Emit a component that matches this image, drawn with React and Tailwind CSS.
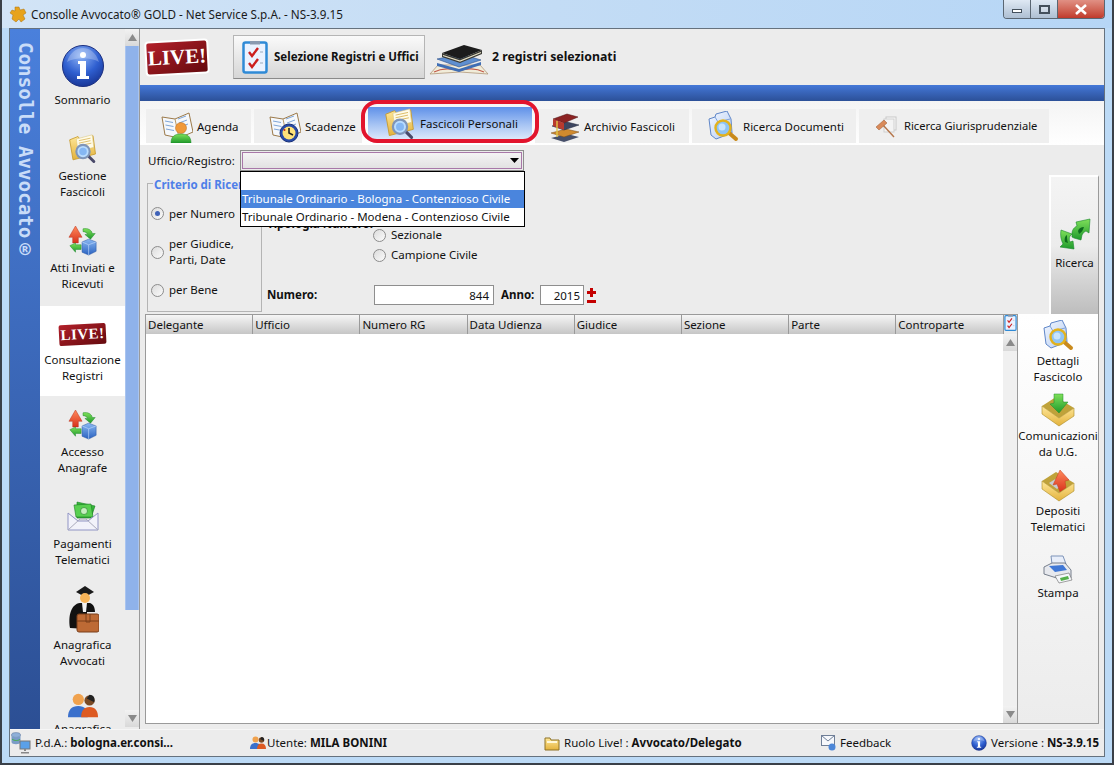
import React from 'react';

// shared gradients, referenced from all the icons below
const IconDefs = () => (
  <svg width="0" height="0" className="absolute">
    <defs>
      <radialGradient id="gBlueBall" cx="45%" cy="25%" r="80%">
        <stop offset="0" stopColor="#8fb4f5" />
        <stop offset="0.55" stopColor="#2f5fd0" />
        <stop offset="1" stopColor="#16318f" />
      </radialGradient>
      <linearGradient id="gFolder" x1="0" y1="0" x2="0" y2="1">
        <stop offset="0" stopColor="#ffe89a" />
        <stop offset="1" stopColor="#e3b23c" />
      </linearGradient>
      <linearGradient id="gGreen" x1="0" y1="0" x2="0" y2="1">
        <stop offset="0" stopColor="#7fe05a" />
        <stop offset="1" stopColor="#1f9a2c" />
      </linearGradient>
      <linearGradient id="gRed" x1="0" y1="0" x2="0" y2="1">
        <stop offset="0" stopColor="#ff8a5c" />
        <stop offset="1" stopColor="#d8321c" />
      </linearGradient>
      <linearGradient id="gBox" x1="0" y1="0" x2="0" y2="1">
        <stop offset="0" stopColor="#8ab8f2" />
        <stop offset="1" stopColor="#2a62c0" />
      </linearGradient>
      <linearGradient id="gPaper" x1="0" y1="0" x2="1" y2="1">
        <stop offset="0" stopColor="#f4f8ff" />
        <stop offset="1" stopColor="#b6cdf2" />
      </linearGradient>
    </defs>
  </svg>
);

const InfoIcon = ({ size = 44 }) => (
  <svg width={size} height={size} viewBox="0 0 44 44">
    <circle cx="22" cy="22" r="20.5" fill="url(#gBlueBall)" stroke="#1b2f80" />
    <path d="M6 18C9 8 16 4 22 4s13 4 16 14c-8-5-24-5-32 0z" fill="#fff" opacity="0.25" />
    <circle cx="22" cy="11" r="3" fill="#fff" />
    <path d="M17 17h8v15h3v3H16v-3h3V20h-2z" fill="#fff" />
  </svg>
);

const Magnifier = ({ x = 14, y = 22 }) => (
  <g transform={`translate(${x} ${y})`}>
    <path d="M15 14l7 7" stroke="#4a4a6a" strokeWidth="3.5" strokeLinecap="round" />
    <circle cx="9" cy="9" r="8" fill="#b8dcff" stroke="#7f95b8" strokeWidth="2.5" />
    <circle cx="9" cy="9" r="4.5" fill="#6fa6ee" opacity="0.7" />
  </g>
);

const FolderSearchIcon = ({ size = 32 }) => (
  <svg width={size} height={size} viewBox="0 0 36 36">
    <path d="M2 7l10-4 2 3 16-4 3 22-27 7z" fill="url(#gFolder)" stroke="#c79a2c" />
    <path d="M10 6l19-5 2 15-19 5z" fill="#fffbe8" stroke="#d7c27a" strokeWidth="0.6" />
    <path d="M13 8l14-3M13 11l14-3M14 14l14-3" stroke="#d8b45a" strokeWidth="1" />
    <Magnifier x={9} y={12} />
  </svg>
);

const ArrowsBoxIcon = ({ size = 30 }) => (
  <svg width={size} height={size} viewBox="0 0 32 32">
    <path d="M8 0l7 12h-4v6H5v-6H1z" fill="url(#gRed)" stroke="#b92b18" strokeWidth="0.5" />
    <path d="M16 3c5-1 9 1 10 5h3l-5 6-6-5h3c-1-2-3-3-5-3z" fill="url(#gGreen)" stroke="#1d8a2a" strokeWidth="0.5" />
    <path d="M2 21l6-3v2h6v5H8v3z" fill="url(#gGreen)" stroke="#1d8a2a" strokeWidth="0.5" />
    <path d="M15 17l7-3 8 3v10l-8 4-7-3z" fill="url(#gBox)" stroke="#1f4d9e" strokeWidth="0.5" />
    <path d="M22 20l8-3M22 20l-7-3M22 20v11" stroke="#bcd6fa" strokeWidth="0.7" fill="none" />
  </svg>
);

const LiveBadge = ({ small = false }) => (
  <div
    className={`flex items-center justify-center rounded-[2px] font-['Liberation_Serif',serif] font-bold text-white bg-gradient-to-br from-[#b3202a] to-[#650a0e] -rotate-3 ${
      small
        ? 'w-[47px] h-[21px] text-[15px] leading-none tracking-[0.5px]'
        : 'w-[60px] h-[31px] text-[21px] leading-none shadow-[0_0_0_2px_#fff]'
    }`}
  >
    LIVE!
  </div>
);

const ChecklistIcon = ({ w = 26, h = 33 }) => (
  <svg width={w} height={h} viewBox="0 0 26 33">
    <rect x="1.5" y="1.5" width="23" height="30" rx="2" fill="#eaf2ff" stroke="#2f8ad6" strokeWidth="2.5" />
    <rect x="8" y="0" width="10" height="3.5" fill="#8a9ab0" />
    <path d="M7 11l3 4 6-8M7 22l3 4 6-8" fill="none" stroke="#cc1f1f" strokeWidth="2.4" />
    <path d="M18 11h3M18 22h3" stroke="#9ab" strokeWidth="1" />
  </svg>
);

const BooksIcon = ({ w = 60, h = 36 }) => (
  <svg width={w} height={h} viewBox="0 0 60 36">
    <path d="M1 35l8-9h42l8 9-28-2z" fill="#f1ecd9" stroke="#a88b6a" strokeWidth="0.7" />
    <path d="M5 33c8-4 18-4 25-1 7-3 17-3 25 1" fill="none" stroke="#c25a4a" strokeWidth="1.2" />
    <path d="M8 20l24-5 20 6-22 7z" fill="#5f8fd0" stroke="#2c4f8a" strokeWidth="0.6" />
    <path d="M8 24l22 6 22-7v3l-22 7-22-6z" fill="#3f6eb5" />
    <path d="M13 14l22-8 18 5-22 9z" fill="#1c1c1c" />
    <path d="M13 14l18 6 22-9v4l-22 9-18-6z" fill="#3a3a34" />
    <path d="M14 16.5l17 5.5 21-8.5" stroke="#e8e2c8" strokeWidth="1.2" fill="none" />
  </svg>
);

const SmallBooksIcon = ({ size = 32 }) => (
  <svg width={size} height={size} viewBox="0 0 32 32">
    <path d="M2 27l16-4 12 3-15 5z" fill="#47506a" />
    <path d="M2 22l15-4 13 3-15 5z" fill="#d08a2e" stroke="#7a4b14" strokeWidth="0.5" />
    <path d="M3 15l15-4 12 3-15 5z" fill="#3d4660" stroke="#1e2438" strokeWidth="0.5" />
    <path d="M4 8l14-5 11 3-14 6z" fill="#8c2323" stroke="#4d0e0e" strokeWidth="0.5" />
    <path d="M4 8l11 4v7l-11-4z" fill="#b83a2e" />
    <path d="M8 10v16" stroke="#e2c84a" strokeWidth="1.4" />
  </svg>
);

const AgendaBase = () => (
  <>
    <path d="M1 6l13 2 14-6 4 19-14 6-14-3z" fill="#f5f8fc" stroke="#9c7a4a" />
    <path d="M14 8l4 19" stroke="#b79a6a" />
    <path d="M4 10l8 1.5M4.5 14l8 1.5M5 18l8 1.5M17 8l8-3M18 12l8-3M19 16l8-3" stroke="#7fa6d8" strokeWidth="1" />
  </>
);

const AgendaIcon = ({ size = 32 }) => (
  <svg width={size} height={size} viewBox="0 0 32 32">
    <AgendaBase />
    <circle cx="20" cy="17" r="5.5" fill="#f0993a" stroke="#b86a1c" strokeWidth="0.5" />
    <path d="M10 32c0-7 4-9 10-9s10 2 10 9z" fill="url(#gGreen)" stroke="#1d8a2a" strokeWidth="0.5" />
  </svg>
);

const ClockAgendaIcon = ({ size = 32 }) => (
  <svg width={size} height={size} viewBox="0 0 32 32">
    <AgendaBase />
    <circle cx="20" cy="22" r="9" fill="#274aa8" stroke="#172f78" />
    <circle cx="20" cy="22" r="6.5" fill="#ffe27a" />
    <path d="M20 17v5l4 2" stroke="#222" strokeWidth="1.6" fill="none" />
    <circle cx="15.5" cy="19" r="1" fill="#c5281c" />
  </svg>
);

const DocSearchIcon = ({ size = 32 }) => (
  <svg width={size} height={size} viewBox="0 0 32 32">
    <path d="M2 8l6-2 1-3 11-3 4 8 1 14-16 6L4 24z" fill="url(#gPaper)" stroke="#5f86c8" />
    <path d="M8 6l3 5 12-3" fill="none" stroke="#7fa3da" />
    <path d="M21 21l8 7" stroke="#c98a1c" strokeWidth="4" strokeLinecap="round" />
    <circle cx="16" cy="17" r="7.5" fill="#8fc4f4" stroke="#e3b21c" strokeWidth="2.4" />
    <circle cx="15" cy="16" r="3.5" fill="#c8e4fc" />
  </svg>
);

const GavelIcon = ({ size = 22 }) => (
  <svg width={size} height={size} viewBox="0 0 22 22">
    <rect x="10" y="1" width="10" height="13" fill="#fafafa" stroke="#c8c8c8" />
    <rect x="8" y="3" width="10" height="13" fill="#f4f4f4" stroke="#d0d0d0" />
    <path d="M7 9l11 12" stroke="#b5754a" strokeWidth="1.4" />
    <path d="M0 11l8-7 3 3-8 7z" fill="#d98a5a" stroke="#9a5a30" strokeWidth="0.5" />
  </svg>
);

// two green arrows chasing each other, upper right and lower left
const RefreshIcon = ({ size = 32 }) => (
  <svg width={size} height={size} viewBox="0 0 32 32">
    <path d="M13 16c0-3 1-6 5-8l-1-4 14-3-1 14-3-2c-2 1-3 2-4 4l-1 5-7-2-2-1z" fill="url(#gGreen)" stroke="#17872a" strokeWidth="0.6" />
    <path d="M2 12l11 4-2 2c-1 2-1 4 0 6l3-1 1 8-14-2 3-3c-2-4-3-9-2-14z" fill="url(#gGreen)" stroke="#17872a" strokeWidth="0.6" />
    <path d="M19 13c1-3 3-4 6-4-1 3-2 5-5 7zM6 24c-1-3 0-6 2-7 0 3 0 5 1 8z" fill="#0d6b1d" />
  </svg>
);

const TrayIcon = ({ up = false, size = 34 }) => (
  <svg width={size} height={size} viewBox="0 0 34 34">
    <path d="M1 13l14-9 18 11-15 10z" fill="#bfa23a" />
    {up ? (
      <>
        <path d="M8 15l8-5 8 5-8 6z" fill="#c9ccd2" />
        <path d="M19 2l9 10-4 1 1 7-6 4-3-8-4 1z" fill="url(#gRed)" stroke="#c23a1c" strokeWidth="0.5" />
      </>
    ) : (
      <path d="M13 1h9v8h5l-9 11-9-9 4-1z" fill="url(#gGreen)" stroke="#1d8a2a" strokeWidth="0.5" />
    )}
    <path d="M1 13v8l17 12 15-10v-8L18 25z" fill="url(#gFolder)" stroke="#a98a24" strokeWidth="0.6" />
  </svg>
);

const PrinterIcon = ({ size = 30 }) => (
  <svg width={size} height={size} viewBox="0 0 30 30">
    <path d="M8 2l12 0 3 8H9z" fill="#e8eefa" stroke="#7d93b8" />
    <path d="M1 13l8-4h13l6 7v8l-8 2-19-6z" fill="#e7e9ee" stroke="#777f8c" />
    <path d="M6 12l14-1 4 5-12 2z" fill="#3f77d6" />
    <path d="M12 22l14-3 3 7-13 3z" fill="#f5f7fa" stroke="#666" strokeWidth="0.6" />
    <path d="M17 24l8-2 1 3-8 2z" fill="#55b04a" />
  </svg>
);

const EnvelopeIcon = ({ size = 32 }) => (
  <svg width={size} height={size} viewBox="0 0 32 32">
    <path d="M10 2l18 4-4 12H10z" fill="#35b53a" stroke="#1b7d24" strokeWidth="0.6" />
    <path d="M7 5l17-1 2 13H9z" fill="#58cf50" stroke="#1b7d24" strokeWidth="0.6" />
    <circle cx="17" cy="11" r="3.5" fill="#c7eec0" stroke="#1b7d24" strokeWidth="0.6" />
    <path d="M1 13l10 8 10 0 10-8v17H1z" fill="#f2f2fa" stroke="#9094c4" />
    <path d="M1 30l12-11h6l12 11" fill="none" stroke="#aab" />
  </svg>
);

const LawyerIcon = () => (
  <svg width="32" height="47" viewBox="0 0 32 47">
    <path d="M9 6l9-6 9 6-9 5z" fill="#1a1a1a" />
    <circle cx="18" cy="12" r="5" fill="#f7b458" />
    <path d="M3 42c-2-12 1-24 10-25h10c3 1 5 4 5 9H20v17z" fill="#111" />
    <path d="M15 17h5l-1 9h-3z" fill="#f2f2f2" />
    <rect x="10" y="28" width="22" height="18" rx="2" fill="#bd6a35" stroke="#7a3f1b" />
    <path d="M10 35h22M19 28v8h4v-8" fill="none" stroke="#7a3f1b" />
  </svg>
);

const PeopleIcon = ({ size = 32 }) => (
  <svg width={size} height={size} viewBox="0 0 32 32">
    <circle cx="11" cy="9" r="6" fill="#f0a24e" />
    <path d="M0 28c0-8 4-12 11-12s10 4 10 12z" fill="#3a70cc" />
    <circle cx="23" cy="10" r="5.5" fill="#7a4a25" />
    <path d="M23 4c4 0 6 3 5 8l-8-4z" fill="#222" />
    <path d="M14 28c0-7 3-11 9-11s9 4 9 11z" fill="#dd5a22" />
  </svg>
);

const ServerPcIcon = () => (
  <svg width="20" height="22" viewBox="0 0 20 22">
    <ellipse cx="5" cy="3" rx="4.5" ry="2.4" fill="#8fb0d8" stroke="#5a7396" strokeWidth="0.5" />
    <path d="M0.5 3v7c0 3 9 3 9 0V3c0 3-9 3-9 0z" fill="#7a9cc7" />
    <path d="M1 7c2 2 7 2 8 0" stroke="#43b04a" fill="none" />
    <rect x="9" y="9" width="10" height="8" fill="#5aa0e8" stroke="#777" />
    <path d="M13 17h2v2h-2zM10 20h8v1.500h-8z" fill="#888" />
  </svg>
);

const FeedbackIcon = () => (
  <svg width="16" height="17" viewBox="0 0 16 17">
    <rect x="0.5" y="0.500" width="13" height="10" fill="#f6f8fc" stroke="#6f7f98" />
    <path d="M0.500 0.500l6.500 5.500 6.500-5.500" fill="none" stroke="#6f7f98" />
    <circle cx="11" cy="12" r="3.500" fill="#4d87d8" />
  </svg>
);

const SmallFolderIcon = () => (
  <svg width="16" height="15" viewBox="0 0 16 15">
    <path d="M1 2h5l1 2h8v10H1z" fill="url(#gFolder)" stroke="#8e7326" />
    <path d="M3 5h10v2H3z" fill="#fff8da" />
  </svg>
);

const Radio = ({ checked = false }) => (
  <span className="flex-none flex items-center justify-center w-[13px] h-[13px] rounded-full border border-[#8c8c8c] bg-gradient-to-br from-[#dcdcdc] to-[#fbfbfb]">
    {checked && <span className="w-[5px] h-[5px] rounded-full bg-[#3f62b8]" />}
  </span>
);

const ScrollArrow = ({ up = false }) => (
  <div className="w-[14px] h-[17px] flex items-center justify-center bg-gradient-to-b from-[#f2f2f2] to-[#d9d9d9]">
    <svg width="9" height="7" viewBox="0 0 9 7">
      <path d={up ? 'M4.500 0L9 7H0z' : 'M4.500 7L9 0H0z'} fill="#8a8a8a" />
    </svg>
  </div>
);

const navItems = [
  { lines: ['Sommario'], h: 'h-[101px]', icon: <InfoIcon />, pt: 'pt-[15px]' },
  { lines: ['Gestione', 'Fascicoli'], h: 'h-[92px]', icon: <FolderSearchIcon size={30} />, pt: 'pt-[4px]' },
  { lines: ['Atti Inviati e', 'Ricevuti'], h: 'h-[84px]', icon: <ArrowsBoxIcon />, pt: 'pt-[4px]' },
];

const navItemsAfter = [
  { lines: ['Accesso', 'Anagrafe'], h: 'h-[92px]', icon: <ArrowsBoxIcon />, pt: 'pt-[14px]' },
  { lines: ['Pagamenti', 'Telematici'], h: 'h-[88px]', icon: <EnvelopeIcon />, pt: 'pt-[12px]' },
  { lines: ['Anagrafica', 'Avvocati'], h: 'h-[97px]', icon: <LawyerIcon />, pt: 'pt-[10px]' },
];

const NavItem = ({ item }) => (
  <div className={`${item.h} ${item.pt} flex-none flex flex-col items-center`}>
    {item.icon}
    <div className="mt-[4px] text-center leading-[16px]">
      {item.lines.map((l) => (
        <div key={l}>{l}</div>
      ))}
    </div>
  </div>
);

const tabs = [
  { label: 'Agenda', w: 'w-[105px]', icon: <AgendaIcon />, gap: 'gap-[4px]', pl: 'pl-[15px] pt-[1px]' },
  { label: 'Scadenze', w: 'w-[108px]', icon: <ClockAgendaIcon />, gap: 'gap-[4px]', pl: 'pl-[15px] pt-[1px]' },
  { label: 'Fascicoli Personali', w: 'w-[164px]', icon: <FolderSearchIcon />, gap: 'gap-[4px]', pl: 'pl-[16px]', active: true },
  { label: 'Archivio Fascicoli', w: 'w-[154px]', icon: <SmallBooksIcon />, gap: 'gap-[3px]', pl: 'pl-[14px] pt-[1px]' },
  { label: 'Ricerca Documenti', w: 'w-[164px]', icon: <DocSearchIcon />, gap: 'gap-[4px]', pl: 'pl-[15px] pt-[1px]' },
  { label: 'Ricerca Giurisprudenziale', w: 'w-[190px]', icon: <GavelIcon />, gap: 'gap-[6px]', pl: 'pl-[17px] pt-[1px] text-[11.2px]' },
];

const columns = ['Delegante', 'Ufficio', 'Numero RG', 'Data Udienza', 'Giudice', 'Sezione', 'Parte', 'Controparte'];

const sideActions = [
  { lines: ['Dettagli', 'Fascicolo'], icon: <DocSearchIcon />, h: 'h-[75px]', pt: 'pt-[6px]' },
  { lines: ['Comunicazioni', 'da U.G.'], icon: <TrayIcon />, h: 'h-[75px]', pt: 'pt-[4px]' },
  { lines: ['Depositi', 'Telematici'], icon: <TrayIcon up />, h: 'h-[86px]', pt: 'pt-[4px]' },
  { lines: ['Stampa'], icon: <PrinterIcon />, h: 'h-[60px]', pt: 'pt-[4px]' },
];

export default function App() {
  return (
    <div className="relative w-[1114px] h-[765px] overflow-hidden flex flex-col font-['Noto_Sans',sans-serif] text-[11.5px] text-[#111] bg-[#bcdaf6] border-x-2 border-[#3a4048]">
      <IconDefs />

      {/* title bar */}
      <div className="h-[28px] flex-none flex items-start pl-[7px] bg-gradient-to-r from-[#d2e4f6] via-[#c3dcf5] to-[#b6d6f6]">
        <svg width="18" height="18" viewBox="0 0 18 18" className="mt-[6px]">
          <path d="M6 1h4l1 3 4-1 2 4-3 2 2 4-4 3-2-3-3 3-4-3 1-4-3-2 2-3 3 1z" fill="#e7a31c" stroke="#a8700e" strokeWidth="0.5" />
        </svg>
        <span className="ml-[4px] mt-[6px] text-[11.7px] leading-[16px] text-[#1a1a1a] whitespace-nowrap">
          Consolle Avvocato® GOLD - Net Service S.p.A. - NS-3.9.15
        </span>
        <div className="ml-auto mr-[7px] flex h-[19px] border border-t-0 border-[#5a6672] rounded-b-[4px] overflow-hidden">
          <div className="w-[27px] flex items-center justify-center bg-gradient-to-b from-[#dfe9f4] to-[#aebfd2] border-r border-[#5a6672]">
            <span className="mt-[4px] w-[10px] h-[4px] bg-white border border-[#44505c]" />
          </div>
          <div className="w-[27px] flex items-center justify-center bg-gradient-to-b from-[#dfe9f4] to-[#aebfd2] border-r border-[#5a6672]">
            <span className="w-[11px] h-[9px] bg-white/20 border-2 border-[#44505c]" />
          </div>
          <div className="w-[46px] flex items-center justify-center bg-gradient-to-b from-[#e09084] to-[#c0392b]">
            <svg width="12" height="11" viewBox="0 0 12 11">
              <path d="M1 1l10 9M11 1L1 10" stroke="#fff" strokeWidth="2.6" />
            </svg>
          </div>
        </div>
      </div>

      {/* window client */}
      <div className="flex-1 min-h-0 mx-[7px] border border-[#66727e] bg-[#ececec] flex flex-col">
        <div className="flex-1 min-h-0 flex">
          {/* vertical product strip */}
          <div className="w-[30px] flex-none bg-gradient-to-b from-[#4a80dc] to-[#2c4f94] pt-[13px] flex justify-center">
            <span className="[writing-mode:vertical-rl] font-['DejaVu_Sans_Mono',monospace] font-bold text-[19.2px] leading-none text-[#c9dcf8] whitespace-nowrap">
              Consolle Avvocato®
            </span>
          </div>

          {/* navigation */}
          <div className="w-[85px] flex-none overflow-hidden flex flex-col">
            {navItems.map((item) => (
              <NavItem key={item.lines[0]} item={item} />
            ))}
            <div className="h-[90px] flex-none bg-white flex flex-col items-center pt-[18px]">
              <LiveBadge small />
              <div className="mt-[7px] text-center leading-[16px]">
                <div>Consultazione</div>
                <div>Registri</div>
              </div>
            </div>
            {navItemsAfter.map((item) => (
              <NavItem key={item.lines[0]} item={item} />
            ))}
            <div className="flex-none flex flex-col items-center pt-[18px]">
              <PeopleIcon size={30} />
              <div className="leading-[16px]">Anagrafica</div>
            </div>
          </div>

          {/* navigation scrollbar */}
          <div className="w-[15px] flex-none border-r border-[#9a9a9a] flex flex-col">
            <ScrollArrow up />
            <div className="h-[564px] flex-none bg-[#8fb2ea] border-x border-[#a9c4ef]" />
            <div className="flex-1" />
            <ScrollArrow />
            <div className="h-[2px]" />
          </div>

          {/* main area */}
          <div className="flex-1 min-w-0 flex flex-col">
            {/* header */}
            <div className="h-[56px] flex-none flex items-center pl-[7px]">
              <LiveBadge />
              <div className="ml-[26px] w-[192px] h-[44px] flex items-center pl-[8px] gap-[6px] border border-[#b5b5b5] border-b-[#8a8a8a] bg-gradient-to-b from-[#fafafa] to-[#d6d6d6]">
                <ChecklistIcon />
                <span className="font-bold text-[11.5px] whitespace-nowrap">Selezione Registri e Uffici</span>
              </div>
              <div className="ml-[4px]">
                <BooksIcon />
              </div>
              <span className="ml-[3px] font-bold text-[12.3px] whitespace-nowrap">2 registri selezionati</span>
            </div>

            {/* blue band */}
            <div className="h-[16px] flex-none bg-gradient-to-b from-[#4478d8] to-[#2c5098]" />

            {/* tabs */}
            <div className="relative h-[44px] flex-none bg-gradient-to-b from-[#f4f4f4] to-[#ffffff] pt-[8px] pl-[6px] flex gap-[3px]">
              {tabs.map((t) => (
                <div
                  key={t.label}
                  className={`${t.w} ${t.pl} ${t.gap} flex-none flex items-center whitespace-nowrap ${
                    t.active
                      ? 'ml-[3px] mt-[-2px] h-[34px] bg-gradient-to-b from-[#5f90e8] via-[#a4c2f3] to-[#e3edfb]'
                      : 'h-[34px] bg-[#efefef]'
                  }`}
                >
                  {t.icon}
                  <span>{t.label}</span>
                </div>
              ))}
              {/* red marker drawn over the screenshot */}
              <div className="absolute left-[221px] top-[-1px] w-[178px] h-[43px] border-[4px] border-[#e2142d] rounded-[16px]" />
            </div>

            {/* search form */}
            <div className="relative h-[169px] flex-none mx-[5px] bg-[#ececec] flex flex-col">
              <div className="h-[32px] flex-none flex items-center pl-[3px]">
                <span className="w-[92px] flex-none">Ufficio/Registro:</span>
                <div className="w-[284px] h-[21px] border border-[#8e8e8e] p-[1px] mt-[-2px]">
                  <div className="h-full border border-[#a878a8] bg-gradient-to-b from-[#f4f4f4] to-[#e2e2e2] flex items-center justify-end pr-[2px]">
                    <svg width="9" height="5" viewBox="0 0 9 5">
                      <path d="M0 0h9L4.500 5z" fill="#000" />
                    </svg>
                  </div>
                </div>
              </div>

              <div className="flex-1 min-h-0 flex">
                {/* criterio */}
                <div className="relative ml-[2px] w-[115px] h-[129px] mt-[6px] flex-none border border-[#b4b4b4] flex flex-col pl-[3px]">
                  <span className="absolute left-[5px] top-[-8px] px-[1px] bg-[#ececec] font-bold text-[#4f7fe8] whitespace-nowrap">
                    Criterio di Ricerca
                  </span>
                  <div className="h-[29px] mt-[15px] flex items-center gap-[5px]">
                    <Radio checked />
                    <span>per Numero</span>
                  </div>
                  <div className="h-[38px] mt-[5px] flex items-center gap-[5px]">
                    <Radio />
                    <span className="leading-[16px]">
                      per Giudice,
                      <br />
                      Parti, Date
                    </span>
                  </div>
                  <div className="h-[22px] mt-[8px] flex items-center gap-[5px]">
                    <Radio />
                    <span>per Bene</span>
                  </div>
                </div>

                {/* numero */}
                <div className="flex-1 min-w-0 pl-[5px] flex flex-col">
                  <div className="mt-[39px] font-bold whitespace-nowrap leading-[16px]">Tipologia Numero:</div>
                  <div className="ml-[106px] mt-[-5px] flex flex-col gap-[4px]">
                    <label className="flex items-center gap-[5px] h-[16px]">
                      <Radio />
                      Sezionale
                    </label>
                    <label className="flex items-center gap-[5px] h-[16px]">
                      <Radio />
                      Campione Civile
                    </label>
                  </div>
                  <div className="mt-[22px] flex items-center">
                    <span className="w-[107px] flex-none font-bold">Numero:</span>
                    <div className="w-[120px] h-[20px] border border-[#8e8e8e] bg-white text-right pr-[4px] leading-[20px]">844</div>
                    <span className="ml-[7px] w-[39px] flex-none font-bold">Anno:</span>
                    <div className="w-[44px] h-[20px] border border-[#8e8e8e] bg-white text-right pr-[3px] leading-[20px]">2015</div>
                    <div className="ml-[2px] w-[11px] flex flex-col items-center">
                      <span className="relative w-[9px] h-[9px]">
                        <span className="absolute left-0 top-[3px] w-[9px] h-[3px] bg-[#c40000]" />
                        <span className="absolute left-[3px] top-0 w-[3px] h-[9px] bg-[#c40000]" />
                      </span>
                      <span className="mt-[3px] w-[9px] h-[3px] bg-[#c40000]" />
                    </div>
                  </div>
                </div>

                {/* ricerca button */}
                <div className="w-[50px] h-[139px] flex-none self-end border-t-2 border-l-2 border-white border-r border-r-[#9a9a9a] bg-gradient-to-b from-[#f4f4f4] via-[#ececec] to-[#bdbdbd] flex flex-col items-center pt-[41px]">
                  <RefreshIcon />
                  <span className="mt-[5px] leading-[16px]">Ricerca</span>
                </div>
              </div>

              {/* open combo list */}
              <div className="absolute left-[95px] top-[26px] w-[285px] h-[56px] border border-black bg-white leading-[18px] whitespace-nowrap">
                <div className="h-[18px]" />
                <div className="h-[18px] px-[1px] bg-[#4a85dd] text-white">Tribunale Ordinario - Bologna - Contenzioso Civile</div>
                <div className="h-[18px] px-[1px]">Tribunale Ordinario - Modena - Contenzioso Civile</div>
              </div>
            </div>

            {/* results + side actions */}
            <div className="flex-1 min-h-0 flex ml-[5px] mr-[5px] mb-[5px]">
              <div className="w-[873px] flex-none border border-[#9a9a9a] bg-white flex flex-col">
                <div className="h-[19px] flex-none flex">
                  {columns.map((c) => (
                    <div
                      key={c}
                      className="w-[107.200px] flex-none px-[2px] border-r border-[#9a9a9a] leading-[19px] bg-gradient-to-b from-[#f6f6f6] to-[#c6c6c6] whitespace-nowrap"
                    >
                      {c}
                    </div>
                  ))}
                  <div className="flex-1 flex items-start justify-center bg-[#ececec]">
                    <ChecklistIcon w={13} h={16} />
                  </div>
                </div>
                <div className="flex-1 min-h-0 flex">
                  <div className="flex-1" />
                  <div className="w-[14px] flex-none bg-[#f0f0f0] flex flex-col justify-between">
                    <ScrollArrow up />
                    <ScrollArrow />
                  </div>
                </div>
              </div>
              <div className="w-[81px] flex-none border-r border-b border-[#9a9a9a] bg-gradient-to-b from-white to-[#ececec] flex flex-col items-center">
                {sideActions.map((a) => (
                  <div key={a.lines[0]} className={`${a.h} ${a.pt} flex-none flex flex-col items-center text-center leading-[16px]`}>
                    {a.icon}
                    <div className="mt-[1px]">
                      {a.lines.map((l) => (
                        <div key={l}>{l}</div>
                      ))}
                    </div>
                  </div>
                ))}
              </div>
            </div>
          </div>
        </div>

        {/* status bar */}
        <div className="h-[27px] flex-none flex items-center bg-[#ececec] border-t border-[#f6f6f6] whitespace-nowrap">
          <div className="w-[240px] flex-none flex items-center gap-[4px] pl-[1px]">
            <ServerPcIcon />
            <span>
              P.d.A.: <b>bologna.er.consi...</b>
            </span>
          </div>
          <div className="w-[294px] flex-none flex items-center gap-[1px]">
            <PeopleIcon size={16} />
            <span>
              Utente: <b>MILA BONINI</b>
            </span>
          </div>
          <div className="w-[277px] flex-none flex items-center gap-[4px]">
            <SmallFolderIcon />
            <span>
              Ruolo Live! : <b>Avvocato/Delegato</b>
            </span>
          </div>
          <div className="w-[150px] flex-none flex items-center gap-[3px]">
            <FeedbackIcon />
            <span>Feedback</span>
          </div>
          <div className="flex items-center gap-[4px]">
            <InfoIcon size={16} />
            <span>
              Versione : <b>NS-3.9.15</b>
            </span>
          </div>
        </div>
      </div>

      {/* bottom frame */}
      <div className="h-[8px] flex-none bg-[#bcdaf6] border-b-2 border-[#3a4048]" />
    </div>
  );
}
